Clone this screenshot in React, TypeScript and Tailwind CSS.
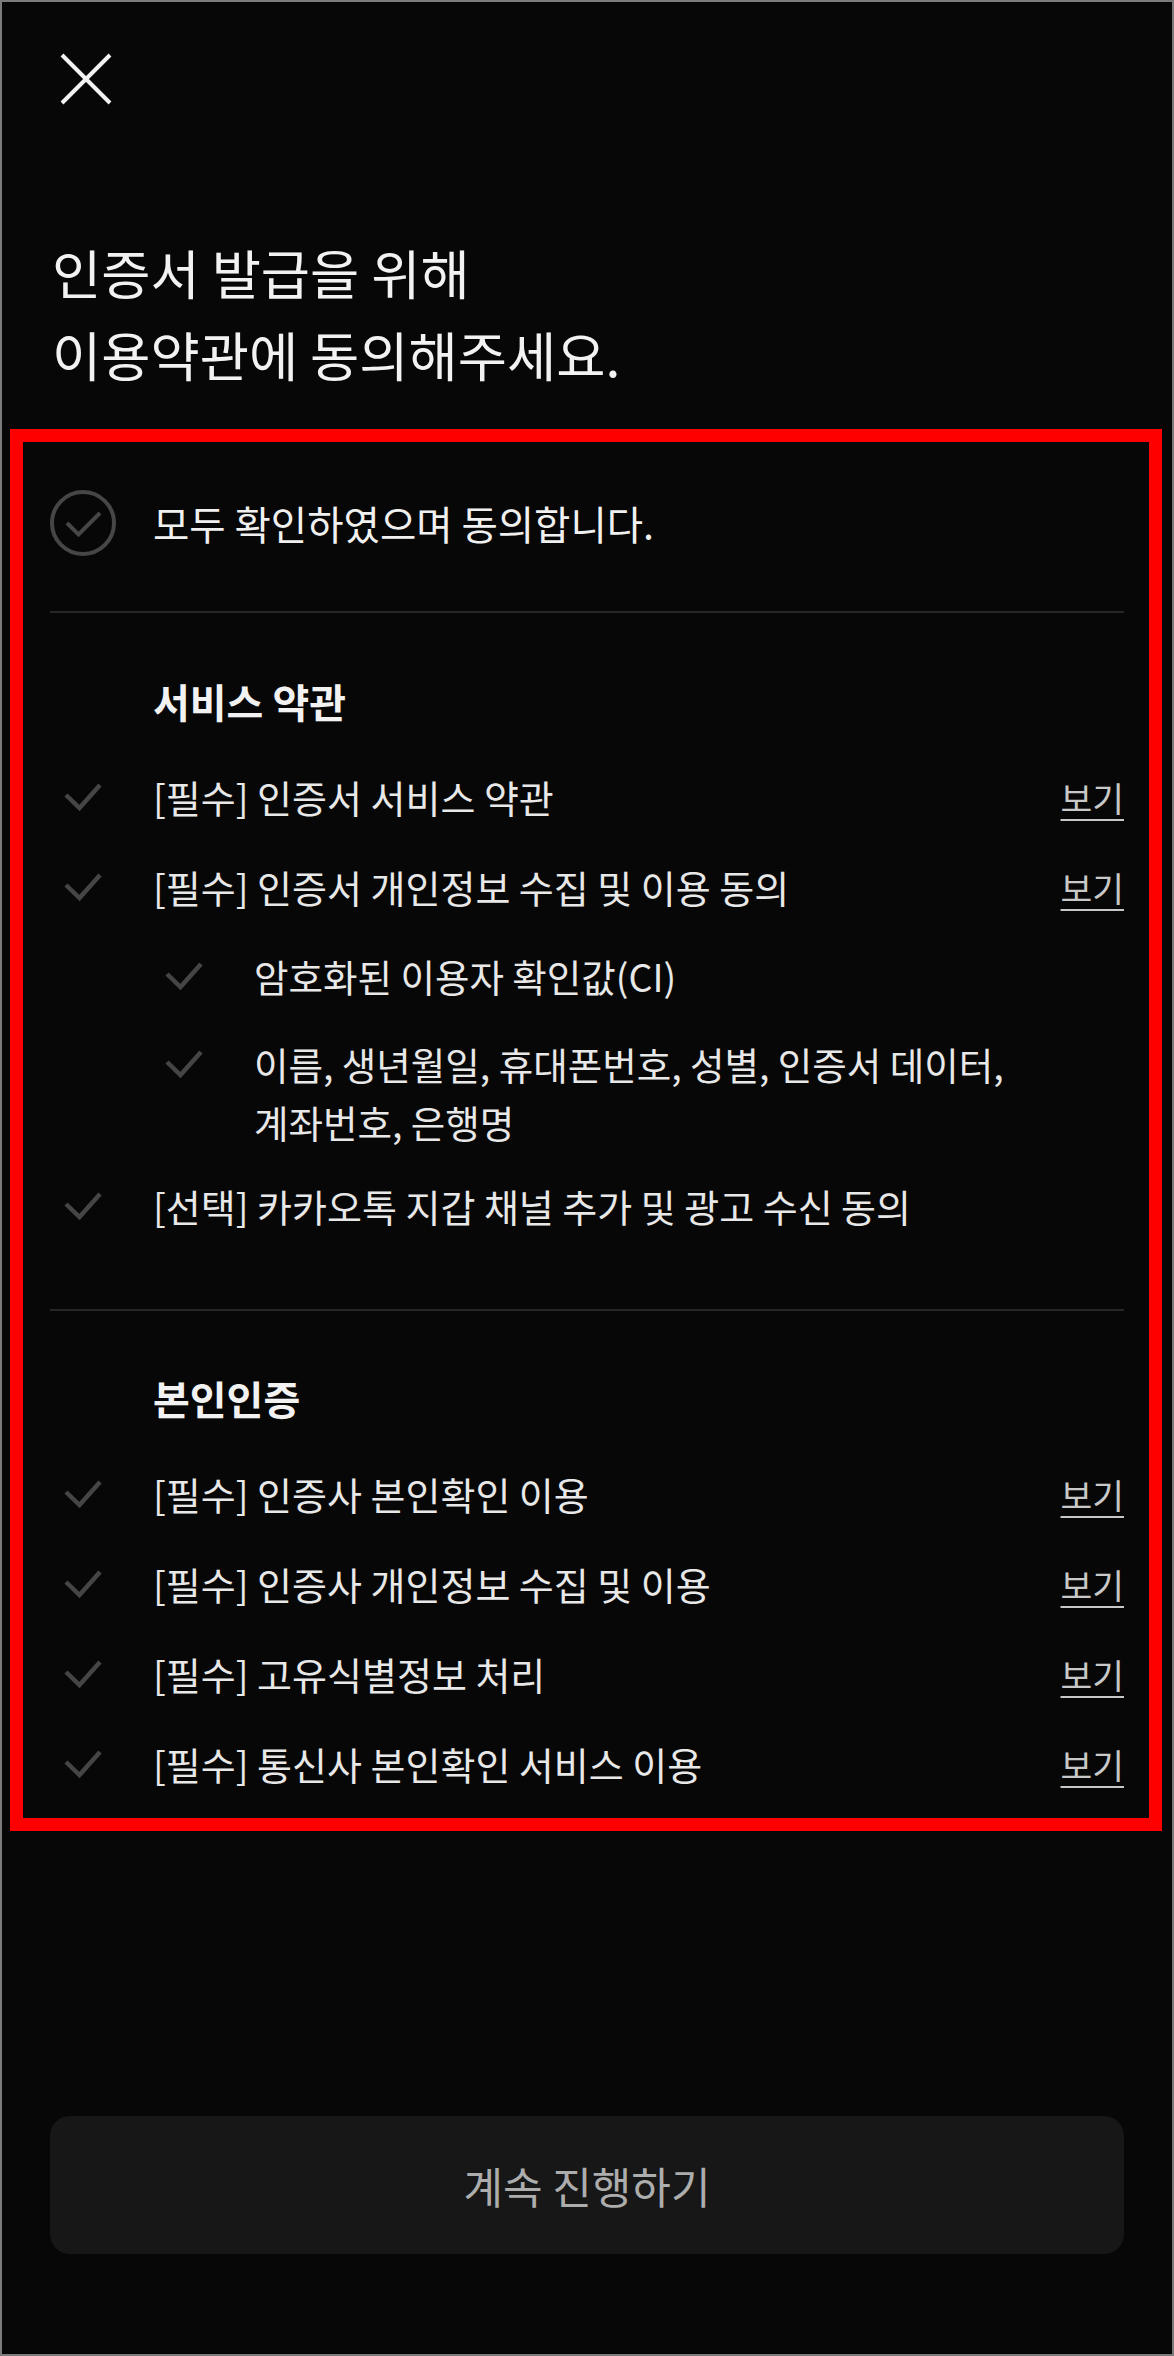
import React from "react";

function Check() {
  return (
    <div className="w-[66px] shrink-0 flex justify-center">
      <svg width="40" height="30" viewBox="0 0 40 30" fill="none">
        <path d="M3 13 L16.5 26 L37 3" stroke="#454545" strokeWidth="4.5" />
      </svg>
    </div>
  );
}

function Row({ label, view = true }: { label: string; view?: boolean }) {
  return (
    <div className="h-[90px] flex items-center">
      <Check />
      <span className="flex-1 ml-[37px] text-[38px] leading-[50px] text-[#e8e8e8]">{label}</span>
      {view && (
        <span className="text-[34.5px] leading-[50px] text-[#c8c8c8] underline decoration-[2px] underline-offset-[7px]">
          보기
        </span>
      )}
    </div>
  );
}

function SubRow({ children }: { children: React.ReactNode }) {
  return (
    <div className="flex items-start py-[15px] pl-[101px]">
      <div className="h-[58px] flex items-center">
        <Check />
      </div>
      <span className="ml-[37px] text-[37.5px] leading-[58px] text-[#e8e8e8]">{children}</span>
    </div>
  );
}

export default function App() {
  return (
    <div className="min-h-[2356px] w-full flex flex-col bg-[#070707] border-2 border-[#7b7b7b] font-['Noto_Sans_CJK_KR','Noto_Sans',sans-serif]">
      <div className="pt-[51px] pl-[58px]">
        <svg width="52" height="52" viewBox="0 0 52 52" fill="none">
          <path d="M2 2 L50 50 M50 2 L2 50" stroke="#f2f2f2" strokeWidth="4" />
        </svg>
      </div>

      <h1 className="mt-[126px] pl-[50px] text-[53.5px] leading-[82px] text-[#f2f2f2] font-normal">
        인증서 발급을 위해
        <br />
        이용약관에 동의해주세요.
      </h1>

      <div className="mt-[34px] ml-[8px] mr-[10px] border-[13px] border-[#ff0000] pl-[27px] pr-[25px] pt-[48px] pb-[9px]">
        <div className="flex items-center">
          <svg width="66" height="66" viewBox="0 0 66 66" fill="none" className="shrink-0">
            <circle cx="33" cy="33" r="31" stroke="#464646" strokeWidth="4" />
            <path d="M17 33 L28.5 44.5 L50 23" stroke="#464646" strokeWidth="4" />
          </svg>
          <span className="ml-[37px] text-[39.5px] leading-[50px] text-[#f0f0f0]">모두 확인하였으며 동의합니다.</span>
        </div>

        <div className="mt-[55px] h-[2px] bg-[#262626]" />

        <h2 className="mt-[63px] pl-[103px] text-[40px] leading-[50px] font-bold text-[#f2f2f2]">서비스 약관</h2>
        <div className="mt-[26px]">
          <Row label="[필수] 인증서 서비스 약관" />
          <Row label="[필수] 인증서 개인정보 수집 및 이용 동의" />
          <SubRow>암호화된 이용자 확인값(CI)</SubRow>
          <SubRow>
            이름, 생년월일, 휴대폰번호, 성별, 인증서 데이터,
            <br />
            계좌번호, 은행명
          </SubRow>
          <div className="h-[80px] flex items-center">
            <Check />
            <span className="ml-[37px] text-[38px] leading-[50px] text-[#e8e8e8]">
              [선택] 카카오톡 지갑 채널 추가 및 광고 수신 동의
            </span>
          </div>
        </div>

        <div className="mt-[63px] h-[2px] bg-[#262626]" />

        <h2 className="mt-[62px] pl-[103px] text-[40px] leading-[50px] font-bold text-[#f2f2f2]">본인인증</h2>
        <div className="mt-[26px]">
          <Row label="[필수] 인증사 본인확인 이용" />
          <Row label="[필수] 인증사 개인정보 수집 및 이용" />
          <Row label="[필수] 고유식별정보 처리" />
          <Row label="[필수] 통신사 본인확인 서비스 이용" />
        </div>
      </div>

      <div className="mt-auto mx-[48px] mb-[100px] h-[138px] rounded-[20px] bg-[#171717] flex items-center justify-center">
        <span className="text-[43px] leading-[50px] text-[#adadad]">계속 진행하기</span>
      </div>
    </div>
  );
}
